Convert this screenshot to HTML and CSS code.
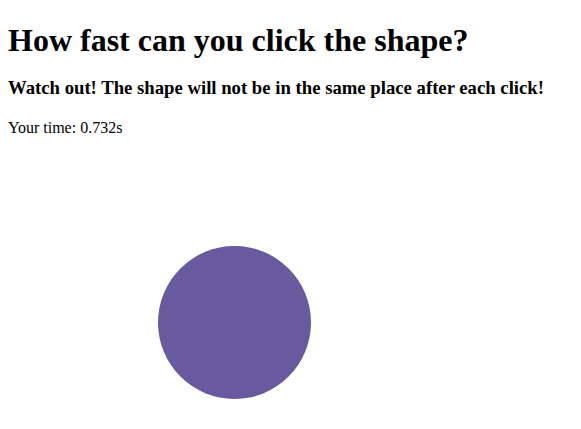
FILE: index.html
```html
<!DOCTYPE html>
<html>
<head>
<meta charset="utf-8">
<link rel="stylesheet" href="styles.css">
</head>
<body>
<h1 class="title">How fast can you click the shape?</h1>
<h3 class="subtitle">Watch out! The shape will not be in the same place after each click!</h3>
<p class="time">Your time: 0.732s</p>
<div class="shape"></div>
</body>
</html>
```
FILE: styles.css
```css
body {
  font-family: "Liberation Serif", "Times New Roman", serif;
}
.title {
  margin: 14.44px 0 0;
}
.subtitle {
  margin: 17.72px 0 19.72px;
}
.time {
  margin: 0 0 16px;
}
.shape {
  width: 153px;
  height: 153px;
  border-radius: 50%;
  background: #675a9f;
  margin-left: 150px;
  margin-top: 109px;
}
```
